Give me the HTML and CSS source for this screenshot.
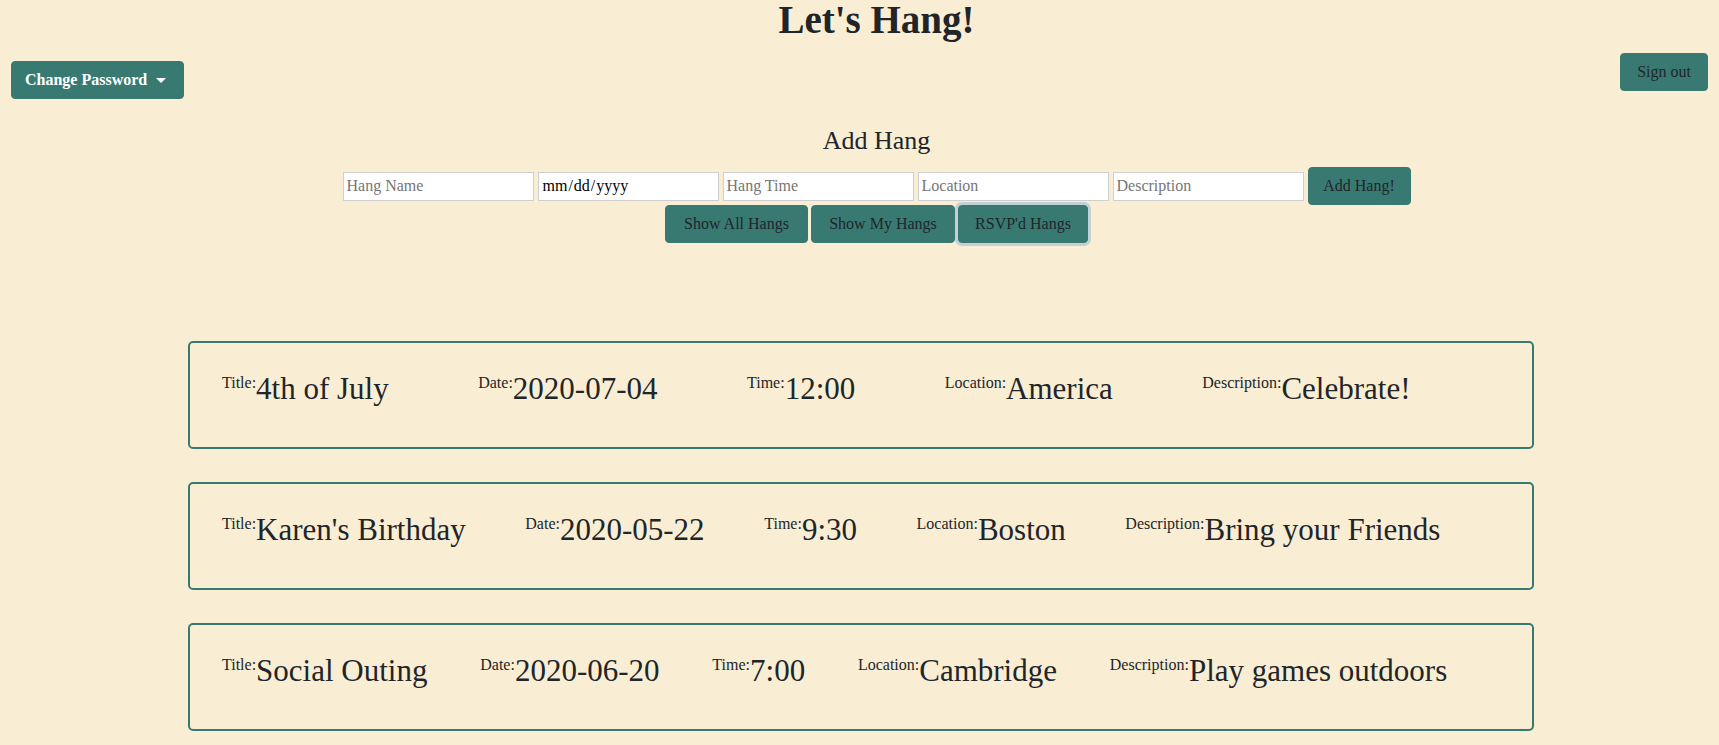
FILE: index.html
```html
<!DOCTYPE html>
<html lang="en">
<head>
<meta charset="utf-8">
<title>Let's Hang!</title>
<link rel="stylesheet" href="styles.css">
</head>
<body>
  <header class="header">
    <h1 class="title">Let's Hang!</h1>
    <div class="toolbar">
      <button class="btn dropdown">Change Password <span class="caret"></span></button>
      <button class="btn">Sign out</button>
    </div>
  </header>

  <section class="add">
    <h4 class="add-title">Add Hang</h4>
    <form class="add-form">
      <input class="field" type="text" placeholder="Hang Name">
      <input class="field field-date" type="date">
      <input class="field" type="text" placeholder="Hang Time">
      <input class="field" type="text" placeholder="Location">
      <input class="field" type="text" placeholder="Description">
      <button class="btn btn-add" type="button">Add Hang!</button>
    </form>
    <div class="filters">
      <button class="btn btn-filter">Show All Hangs</button>
      <button class="btn btn-filter">Show My Hangs</button>
      <button class="btn btn-filter is-focused">RSVP'd Hangs</button>
    </div>
  </section>

  <main class="hangs">
    <div class="card">
      <span class="item"><span class="label">Title:</span>4th of July</span>
      <span class="item"><span class="label">Date:</span>2020-07-04</span>
      <span class="item"><span class="label">Time:</span>12:00</span>
      <span class="item"><span class="label">Location:</span>America</span>
      <span class="item"><span class="label">Description:</span>Celebrate!</span>
      <span class="item-end"></span>
    </div>
    <div class="card">
      <span class="item"><span class="label">Title:</span>Karen's Birthday</span>
      <span class="item"><span class="label">Date:</span>2020-05-22</span>
      <span class="item"><span class="label">Time:</span>9:30</span>
      <span class="item"><span class="label">Location:</span>Boston</span>
      <span class="item"><span class="label">Description:</span>Bring your Friends</span>
      <span class="item-end"></span>
    </div>
    <div class="card">
      <span class="item"><span class="label">Title:</span>Social Outing</span>
      <span class="item"><span class="label">Date:</span>2020-06-20</span>
      <span class="item"><span class="label">Time:</span>7:00</span>
      <span class="item"><span class="label">Location:</span>Cambridge</span>
      <span class="item"><span class="label">Description:</span>Play games outdoors</span>
      <span class="item-end"></span>
    </div>
  </main>
</body>
</html>
```
FILE: styles.css
```css
* { box-sizing: border-box; }

body {
  margin: 0;
  background: #f9eed4;
  color: #212529;
  font-family: "Liberation Serif", "Times New Roman", serif;
  font-size: 16px;
}

.title {
  margin: 0;
  padding-left: 34px;
  text-align: center;
  font-size: 39px;
  line-height: 40px;
  font-weight: bold;
}

.toolbar {
  display: flex;
  justify-content: space-between;
  align-items: flex-start;
  margin-top: 13px;
  padding: 0 11px;
}

.btn {
  height: 38px;
  padding: 0 16px;
  border: 1px solid #387a72;
  border-radius: 4px;
  background: #387a72;
  color: #212529;
  font-family: inherit;
  font-size: 16px;
  line-height: 1;
  white-space: nowrap;
  cursor: pointer;
}

.dropdown {
  margin-top: 8px;
  width: 173px;
  padding: 0 13px;
  color: #fff;
  font-weight: bold;
  display: flex;
  align-items: center;
  gap: 9px;
}

.caret {
  width: 0;
  height: 0;
  border-left: 5px solid transparent;
  border-right: 5px solid transparent;
  border-top: 5px solid #fff;
}

.add {
  padding-left: 34px;
  display: flex;
  flex-direction: column;
  align-items: center;
}

.add-title {
  margin: 26px 0 0;
  font-size: 26px;
  line-height: 1.2;
  font-weight: normal;
}

.add-form {
  display: flex;
  align-items: center;
  gap: 4px;
  margin-top: 11px;
}

.field {
  width: 191px;
  height: 29px;
  padding: 1px 3px;
  border: 1px solid #cfcfcf;
  border-radius: 0;
  background: #fff;
  color: #000;
  font-family: inherit;
  font-size: 16px;
}

.field::placeholder { color: #767676; }

.field-date { width: 181px; }
.field-date::-webkit-calendar-picker-indicator { display: none; }

.btn-add { padding: 0; width: 103px; }

.filters {
  display: flex;
  gap: 3px;
}

.btn-filter { padding: 0; }
.btn-filter:nth-child(1) { width: 143px; }
.btn-filter:nth-child(2) { width: 144px; }
.btn-filter:nth-child(3) { width: 130px; }

.is-focused {
  box-shadow: 0 0 0 3px rgba(150, 185, 210, 0.55);
}

.hangs {
  margin-top: 98px;
}

.card {
  width: 1346px;
  height: 108px;
  margin: 0 0 33px 188px;
  padding: 24px 32px 0;
  border: 2px solid #387a72;
  border-radius: 5px;
  display: flex;
  justify-content: space-between;
  align-items: flex-start;
}

.item {
  font-size: 31px;
  line-height: 44px;
  white-space: nowrap;
}

.label {
  font-size: 16px;
  line-height: 1;
  vertical-align: 11px;
}

.item-end { width: 0; }
```
